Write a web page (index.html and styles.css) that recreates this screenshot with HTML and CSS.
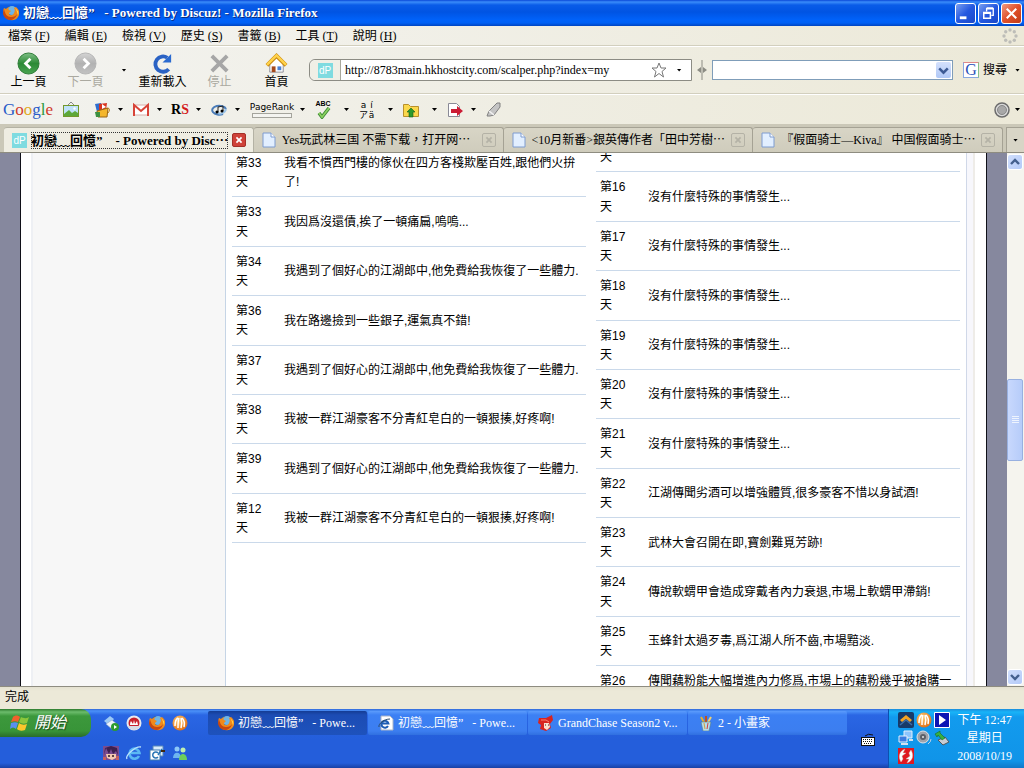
FILE: index.html
```html
<!DOCTYPE html>
<html lang="zh-Hant">
<head>
<meta charset="utf-8">
<title>初戀﹏回憶” - Powered by Discuz! - Mozilla Firefox</title>
<link rel="stylesheet" href="styles.css">
</head>
<body>
<svg class="defs" aria-hidden="true">
  <defs>
    <radialGradient id="orb" cx="40%" cy="35%" r="70%"><stop offset="0" stop-color="#ffd27a"/><stop offset="1" stop-color="#e06a10"/></radialGradient>
    <linearGradient id="greenball" x1="0" y1="0" x2="0" y2="1"><stop offset="0" stop-color="#7fbf86"/><stop offset=".5" stop-color="#2c8a36"/><stop offset="1" stop-color="#4aa552"/></linearGradient>
    <linearGradient id="grayball" x1="0" y1="0" x2="0" y2="1"><stop offset="0" stop-color="#d4d4d4"/><stop offset=".5" stop-color="#b2b2b2"/><stop offset="1" stop-color="#c2c2c2"/></linearGradient>
    <symbol id="firefox" viewBox="0 0 16 16">
      <circle cx="8" cy="8" r="7" fill="#2b5fa8"/><circle cx="9" cy="5.500" r="4.500" fill="#6fb4e6"/>
      <path d="M1 3l2 1c1-1 2-2 4-2-2 1-2 2-1 3l2 1-2 2c0 3 4 3 5 0 1-2 1-3 0-5l2-1c4 3 4 7 2 10-3 5-11 4-13-1C0 8 0 5 1 3z" fill="#f08a1c"/>
      <path d="M1 4c1 5 3 8 7 8 3 0 5-1 6-3-1 4-4 6-7 6C3 15 0 11 0 8z" fill="#c9480f"/>
      <path d="M12 3c3 2 4 5 3 7-1-2-1-5-3-7z" fill="#ffd84a"/>
    </symbol>
    <symbol id="orangeball" viewBox="0 0 16 16">
      <circle cx="8" cy="8" r="7.500" fill="url(#orb)"/>
      <path d="M3 11c0-4 1-7 3-8M6 13c0-4 0-8 1-10M9 13c1-4 1-7 0-10M12 12c1-4 0-7-2-9" fill="none" stroke="#fff" stroke-width="1.500"/>
    </symbol>
    <symbol id="page" viewBox="0 0 14 16">
      <path d="M1 1h8l4 4v10H1z" fill="#e2efff" stroke="#7e9cd0"/><path d="M9 1v4h4" fill="#fff" stroke="#7e9cd0"/>
    </symbol>
    <symbol id="flag" viewBox="0 0 20 18">
      <path d="M3 3c2-2 5-2 7 0L8 8C6 7 4 7 1 8z" fill="#f0602c"/><path d="M11 3c2 1 5 2 8 0l-2 6c-3 1-5 1-8-1z" fill="#8cc63c"/>
      <path d="M1 9c3-1 5-1 7 0l-2 6c-2-2-4-2-6 0z" fill="#5a8ff0"/><path d="M9 9c3 2 5 2 8 1l-2 6c-3 1-6 1-8-1z" fill="#fbc62c"/>
    </symbol>
  </defs>
</svg>

<header class="titlebar">
  <svg class="ico" viewBox="0 0 16 16"><use href="#firefox"/></svg>
  <h1 class="titlebar__text">初戀﹏回憶” &nbsp;&nbsp;- Powered by Discuz! - Mozilla Firefox</h1>
  <div class="winbtns">
    <button class="winbtn" aria-label="最小化"><svg viewBox="0 0 20 20"><path d="M4 13h7v3H4z" fill="#fff"/></svg></button>
    <button class="winbtn" aria-label="還原"><svg viewBox="0 0 20 20"><path d="M8 8V5h7v7h-2M8 4h7" fill="none" stroke="#fff" stroke-width="1.400"/><path d="M5 9h7v6H5zM5 9.600h7" fill="none" stroke="#fff" stroke-width="1.600"/></svg></button>
    <button class="winbtn winbtn--close" aria-label="關閉"><svg viewBox="0 0 20 20"><path d="M5 5l10 10M15 5L5 15" stroke="#fff" stroke-width="2.200"/></svg></button>
  </div>
</header>

<nav class="menubar">
  <button class="menu">檔案 (<u>F</u>)</button>
  <button class="menu">編輯 (<u>E</u>)</button>
  <button class="menu">檢視 (<u>V</u>)</button>
  <button class="menu">歷史 (<u>S</u>)</button>
  <button class="menu">書籤 (<u>B</u>)</button>
  <button class="menu">工具 (<u>T</u>)</button>
  <button class="menu">說明 (<u>H</u>)</button>
  <svg class="ico throbber" viewBox="0 0 16 16" fill="#bdbdb8"><circle cx="8" cy="2" r="1.700"/><circle cx="12.300" cy="3.700" r="1.700"/><circle cx="14" cy="8" r="1.700"/><circle cx="12.300" cy="12.300" r="1.700"/><circle cx="8" cy="14" r="1.700"/><circle cx="3.700" cy="12.300" r="1.700"/><circle cx="2" cy="8" r="1.700"/><circle cx="3.700" cy="3.700" r="1.700"/></svg>
</nav>

<div class="navbar">
  <button class="navbtn"><svg viewBox="0 0 24 24"><circle cx="12" cy="12" r="11" fill="url(#greenball)" stroke="#2d7a36"/><path d="M14 7l-5 5 5 5" fill="none" stroke="#fff" stroke-width="3"/></svg>上一頁</button>
  <button class="navbtn navbtn--off" disabled><svg viewBox="0 0 24 24"><circle cx="12" cy="12" r="11" fill="url(#grayball)" stroke="#b4b4b4"/><path d="M10 7l5 5-5 5" fill="none" stroke="#fff" stroke-width="3"/></svg>下一頁</button>
  <button class="caretbtn" aria-label="最近頁面"><span class="caret"></span></button>
  <button class="navbtn"><svg viewBox="0 0 24 24"><path d="M18.500 18A8 8 0 1 1 17 6" fill="none" stroke="#2a62c4" stroke-width="4"/><path d="M12 11h9V2z" fill="#2a6ad0"/></svg>重新載入</button>
  <button class="navbtn navbtn--off" disabled><svg viewBox="0 0 24 24"><path d="M4 4l16 16M20 4L4 20" stroke="#a6a6a6" stroke-width="4"/></svg>停止</button>
  <button class="navbtn"><svg viewBox="0 0 24 24"><path d="M5 12v9h14v-9l-7-6z" fill="#fff" stroke="#8c8c94"/><path d="M2 14L12 4l10 10" fill="none" stroke="#c98a10" stroke-width="4"/><path d="M2 13.500L12 3.500l10 10" fill="none" stroke="#ffd24a" stroke-width="2.500"/><path d="M7 15h4v6H7z" fill="#a54a1c"/><path d="M13 15h4v4h-4z" fill="#4a80d4"/></svg>首頁</button>
  <div class="urlbox">
    <span class="urlbox__site"><span class="dp">dP</span></span>
    <input class="urlbox__input" type="text" aria-label="網址" value="http://8783main.hkhostcity.com/scalper.php?index=my">
    <button class="plain" aria-label="加入書籤"><svg class="ico" viewBox="0 0 16 16"><path d="M8 1l2 5h5l-4 3.500L12.500 15 8 11.500 3.500 15 5 9.500 1 6h5z" fill="#fff" stroke="#777"/></svg></button>
    <button class="plain plain--caret" aria-label="展開網址"><span class="caret"></span></button>
  </div>
  <svg class="splitter" viewBox="0 0 10 20"><path d="M5 0v20" stroke="#8c8c84"/><path d="M4 7v6L0 10zM6 7v6l4-3z" fill="#8c8c84"/></svg>
  <div class="searchbox">
    <input class="searchbox__input" type="text" aria-label="搜尋字詞">
    <button class="xpdrop" aria-label="搜尋記錄"><svg viewBox="0 0 14 14"><path d="M3 5l4 4 4-4" fill="none" stroke="#3c5a94" stroke-width="2.400"/></svg></button>
  </div>
  <button class="gsearch"><span class="gicon">G</span>搜尋<span class="caret"></span></button>
</div>

<div class="gbar">
  <a class="glogo" href="#" aria-label="Google"><span class="gb">G</span><span class="gr">o</span><span class="gy">o</span><span class="gb">g</span><span class="gg">l</span><span class="gr">e</span></a>
  <button class="tool" aria-label="圖片"><svg class="ico" viewBox="0 0 16 16"><path d="M5 3l3-3 3 3" fill="none" stroke="#888"/><rect x=".5" y="3.500" width="15" height="11" fill="#bfe2fa" stroke="#73982c"/><path d="M1 12l5-4 3 3 3-2 3 2v3H1z" fill="#5da83a"/><circle cx="11.500" cy="6.500" r="1.200" fill="#fff"/></svg></button>
  <button class="tool" aria-label="遊戲"><svg class="ico" viewBox="0 0 16 16"><path d="M1 2l6-1 2 7-6 2z" fill="#2e6ed0"/><path d="M5 2l8-1-1 7-7 1z" fill="#d83420"/><path d="M8 2l4 3-4 2z" fill="#fff"/><path d="M3 9l11-3-1 9H4z" fill="#f4b62c" stroke="#996514"/><path d="M1 10h5v5H2z" fill="#3c9040"/><path d="M14 6q3 1 0 5" stroke="#c08018" fill="none"/></svg><span class="caret"></span></button>
  <button class="tool" aria-label="Gmail"><svg class="ico" viewBox="0 0 16 16"><path d="M1 3h14v10H1z" fill="#fff" stroke="#d8b0ac"/><path d="M1 14V3l7 6 7-6v11" fill="none" stroke="#d84438" stroke-width="2"/></svg><span class="caret"></span></button>
  <button class="tool" aria-label="RapidShare"><span class="rs">R<b>S</b></span><span class="caret"></span></button>
  <button class="tool" aria-label="音樂"><svg class="ico" viewBox="0 0 16 16"><path d="M12 12A7 4.500 0 1 1 15 7" fill="none" stroke="#4a7cb8" stroke-width="2"/><path d="M5 9c3 5 9 2 10-2" fill="none" stroke="#9cc4e8" stroke-width="2"/><path d="M7 10V5l5-1v5" fill="none" stroke="#222"/><circle cx="6" cy="10" r="1.500"/><circle cx="11" cy="9" r="1.500"/></svg><span class="caret"></span></button>
  <button class="tool tool--rank"><span class="rank">PageRank<span class="rank__bar"></span></span><span class="caret"></span></button>
  <button class="tool tool--wide" aria-label="拼字檢查"><span class="abc">ABC<svg viewBox="0 0 16 12"><path d="M4 6l3 4 7-9" fill="none" stroke="#3c8a34" stroke-width="3.500"/><path d="M4 6l3 4 7-9" fill="none" stroke="#8cd060" stroke-width="1.700"/></svg></span><span class="caret"></span></button>
  <button class="tool tool--wide" aria-label="翻譯"><span class="trans"><span>a</span><span>í</span><span>ア</span><span>ä</span></span><span class="caret"></span></button>
  <button class="tool tool--wide" aria-label="書籤資料夾"><svg class="ico" viewBox="0 0 16 16"><path d="M.5 2.500h5l2 2h8v10H.5z" fill="#fbd84c" stroke="#b8902c"/><path d="M8 6l4 4h-2v5H6v-5H4z" fill="#2c9a2c" stroke="#186018" stroke-width=".6"/></svg><span class="caret"></span></button>
  <button class="tool" aria-label="傳送"><svg class="ico" viewBox="0 0 16 16"><path d="M1.500 1.500h8l3 3v10h-11z" fill="#fff" stroke="#8a8a96"/><path d="M4 7h6V4l6 5-6 5v-3H4z" fill="#cc1c34"/></svg><span class="caret"></span></button>
  <button class="tool" aria-label="螢光筆"><svg class="ico" viewBox="0 0 16 16"><path d="M1 14l2-5 8-8h3v4L8 13l-4 1z" fill="#c4c4c4" stroke="#808080"/><path d="M3 9l5 4" stroke="#f4f4f4" stroke-width="1.500"/></svg></button>
  <button class="tool tool--end" aria-label="帳戶"><svg class="ico" viewBox="0 0 16 16"><circle cx="8" cy="8" r="7" fill="#dadada" stroke="#6c6c6c" stroke-width="1.500"/><circle cx="8" cy="8" r="4.500" fill="#a8a8a8" stroke="#888"/></svg><span class="caret"></span></button>
</div>

<div class="tabs" role="tablist">
  <div class="tab tab--on"><span class="dp">dP</span><button class="tab__name" role="tab" aria-selected="true">初戀﹏回憶” &nbsp;&nbsp;&nbsp;- Powered by Disc⋯</button><button class="tab__x" aria-label="關閉分頁"><svg viewBox="0 0 14 14"><path d="M4 4l6 6M10 4l-6 6" stroke="currentColor" stroke-width="2"/></svg></button></div>
  <div class="tab"><svg class="pageico"><use href="#page"/></svg><button class="tab__name" role="tab">Yes玩武林三国 不需下载，打开网⋯</button><button class="tab__x" aria-label="關閉分頁"><svg viewBox="0 0 14 14"><path d="M4 4l6 6M10 4l-6 6" stroke="currentColor" stroke-width="2"/></svg></button></div>
  <div class="tab"><svg class="pageico"><use href="#page"/></svg><button class="tab__name" role="tab">&lt;10月新番&gt;銀英傳作者「田中芳樹⋯</button><button class="tab__x" aria-label="關閉分頁"><svg viewBox="0 0 14 14"><path d="M4 4l6 6M10 4l-6 6" stroke="currentColor" stroke-width="2"/></svg></button></div>
  <div class="tab"><svg class="pageico"><use href="#page"/></svg><button class="tab__name" role="tab">『假面骑士—Kiva』 中国假面骑士⋯</button><button class="tab__x" aria-label="關閉分頁"><svg viewBox="0 0 14 14"><path d="M4 4l6 6M10 4l-6 6" stroke="currentColor" stroke-width="2"/></svg></button></div>
  <button class="taball" aria-label="所有分頁"><span class="caret"></span></button>
</div>

<main class="view">
  <div class="site">
    <div class="board">
      <aside class="side"></aside>
      <div class="logs">
        <table class="log">
          <tr><th scope="row">第33 天</th><td>我看不慣西門樓的傢伙在四方客棧欺壓百姓,跟他們火拚了!</td></tr>
          <tr><th scope="row">第33 天</th><td>我因爲沒還債,挨了一頓痛扁,嗚嗚...</td></tr>
          <tr><th scope="row">第34 天</th><td>我遇到了個好心的江湖郎中,他免費給我恢復了一些體力.</td></tr>
          <tr><th scope="row">第36 天</th><td>我在路邊撿到一些銀子,運氣真不錯!</td></tr>
          <tr><th scope="row">第37 天</th><td>我遇到了個好心的江湖郎中,他免費給我恢復了一些體力.</td></tr>
          <tr><th scope="row">第38 天</th><td>我被一群江湖豪客不分青紅皂白的一頓狠揍,好疼啊!</td></tr>
          <tr><th scope="row">第39 天</th><td>我遇到了個好心的江湖郎中,他免費給我恢復了一些體力.</td></tr>
          <tr><th scope="row">第12 天</th><td>我被一群江湖豪客不分青紅皂白的一頓狠揍,好疼啊!</td></tr>
        </table>
        <table class="log log--news">
          <tr><th scope="row">第15 天</th><td></td></tr>
          <tr><th scope="row">第16 天</th><td>沒有什麼特殊的事情發生...</td></tr>
          <tr><th scope="row">第17 天</th><td>沒有什麼特殊的事情發生...</td></tr>
          <tr><th scope="row">第18 天</th><td>沒有什麼特殊的事情發生...</td></tr>
          <tr><th scope="row">第19 天</th><td>沒有什麼特殊的事情發生...</td></tr>
          <tr><th scope="row">第20 天</th><td>沒有什麼特殊的事情發生...</td></tr>
          <tr><th scope="row">第21 天</th><td>沒有什麼特殊的事情發生...</td></tr>
          <tr><th scope="row">第22 天</th><td>江湖傳聞劣酒可以增強體質,很多豪客不惜以身試酒!</td></tr>
          <tr><th scope="row">第23 天</th><td>武林大會召開在即,寶劍難覓芳跡!</td></tr>
          <tr><th scope="row">第24 天</th><td>傳說軟蝟甲會造成穿戴者內力衰退,市場上軟蝟甲滯銷!</td></tr>
          <tr><th scope="row">第25 天</th><td>玉蜂針太過歹毒,爲江湖人所不齒,市場黯淡.</td></tr>
          <tr><th scope="row">第26 天</th><td>傳聞藕粉能大幅增進內力修爲,市場上的藕粉幾乎被搶購一空!</td></tr>
        </table>
      </div>
    </div>
  </div>
  <div class="scroll">
    <button class="scroll__btn" aria-label="向上捲動"><svg viewBox="0 0 14 14"><path d="M3 9l4-4 4 4" fill="none" stroke="#44608e" stroke-width="2.400"/></svg></button>
    <div class="scroll__track"><div class="scroll__thumb"><i></i><i></i><i></i><i></i></div></div>
    <button class="scroll__btn" aria-label="向下捲動"><svg viewBox="0 0 14 14"><path d="M3 5l4 4 4-4" fill="none" stroke="#44608e" stroke-width="2.400"/></svg></button>
  </div>
</main>

<div class="status">完成</div>

<footer class="taskbar">
  <button class="start"><svg viewBox="0 0 20 18"><use href="#flag"/></svg>開始</button>
  <div class="quick">
    <button class="plain" aria-label="相片工具"><svg class="ico" viewBox="0 0 16 16"><path d="M1 6l6-5 4 3-5 6z" fill="#9ccaf6"/><path d="M3 9l6-4 6 5-5 5z" fill="#eef4fc" stroke="#8ca4c8" stroke-width=".6"/><circle cx="12" cy="12" r="4" fill="#2c9a30"/><path d="M11 10v4l3-2z" fill="#fff"/></svg></button>
    <button class="plain" aria-label="播放器"><svg class="ico" viewBox="0 0 16 16"><circle cx="8" cy="8" r="7.500" fill="#e8eaf0"/><circle cx="8" cy="8" r="5.500" fill="#c8202c"/><path d="M4 10c0-3 1-4 1-4l2 3 1-4 1 4 2-3 1 4z" fill="#fff"/><path d="M2 11a6.500 6.500 0 0 0 12 0z" fill="#d8dce4"/></svg></button>
    <button class="plain" aria-label="Firefox"><svg class="ico" viewBox="0 0 16 16"><use href="#firefox"/></svg></button>
    <button class="plain" aria-label="GG"><svg class="ico" viewBox="0 0 16 16"><use href="#orangeball"/></svg></button>
    <button class="plain" aria-label="遊戲人物"><svg class="ico" viewBox="0 0 16 16"><path d="M0 1h16v14H0z" fill="#7a4c90"/><path d="M3 9h10v4l-4 2-5-2z" fill="#f4c8b0"/><path d="M1 10l2-7 3 6 2-5 2 5 3-3 2 4-1-7-6-2-6 2z" fill="#3c2050"/><path d="M5 11h2M9 11h2" stroke="#301820" stroke-width="1.500"/><path d="M0 12h3v3H0zM13 11h3v4h-3z" fill="#c46060"/></svg></button>
    <button class="plain" aria-label="Internet Explorer"><svg class="ico" viewBox="0 0 16 16"><path d="M13 11a5 5 0 1 1 .5-3H5" fill="none" stroke="#5ab8f4" stroke-width="2.600"/><path d="M1 14c-2-3 8-13 14-12" fill="none" stroke="#bce4fc" stroke-width="1.300"/></svg></button>
    <button class="plain" aria-label="Outlook"><svg class="ico" viewBox="0 0 16 16"><path d="M4 1h10v10H4z" fill="#d8ecfc" stroke="#5888b8"/><path d="M1 5h10v10H1z" fill="#fff" stroke="#3c78b0"/><path d="M9 8a3 3 0 1 0 0 4M9 10l4-6" fill="none" stroke="#2874b4" stroke-width="1.500"/><path d="M12 6h4" stroke="#402810" stroke-width="2"/></svg></button>
    <button class="plain" aria-label="Messenger"><svg class="ico" viewBox="0 0 16 16"><circle cx="5" cy="4" r="2.500" fill="#8cc8f8"/><path d="M1 13c0-7 8-7 8 0z" fill="#6cb4f0"/><circle cx="11" cy="5" r="2.500" fill="#c0f0b0"/><path d="M7 15c0-8 8-8 8 0z" fill="#6cd05c"/></svg></button>
  </div>
  <div class="tasks">
    <button class="task task--on"><svg class="ico" viewBox="0 0 16 16"><use href="#firefox"/></svg><span>初戀﹏回憶” &nbsp;&nbsp;- Powe...</span></button>
    <button class="task"><svg class="ico" viewBox="0 0 16 16"><path d="M3 1h9l3 3v11H3z" fill="#fff" stroke="#a8b4c8"/><path d="M10 11a3.500 3.500 0 1 1 .4-2.500H4" fill="none" stroke="#1c5cb4" stroke-width="2"/><path d="M1 12C0 9 6 4 12 4" fill="none" stroke="#2c4c6c"/></svg><span>初戀﹏回憶” &nbsp;&nbsp;- Powe...</span></button>
    <button class="task"><svg class="ico" viewBox="0 0 16 16"><path d="M1 3l7 0 6-3 1 5-3 4 1 4-5 3-6-2 1-4-3-2z" fill="#d82420"/><path d="M6 8l5 0 1 4-3 3-3-2z" fill="#fbe0d0"/><path d="M3 5l5 0 3 2" stroke="#f88070" fill="none"/><path d="M7 10h1M10 10h1" stroke="#402020"/></svg><span>GrandChase Season2 v...</span></button>
    <button class="task"><svg class="ico" viewBox="0 0 16 16"><path d="M7 9L3 2" stroke="#e4b030" stroke-width="2"/><path d="M8 9V1" stroke="#c05020" stroke-width="2"/><path d="M9 9l4-7" stroke="#f0d070" stroke-width="2"/><path d="M3 7h10l-2 9H5z" fill="#b8dce8" stroke="#507888" stroke-width=".6"/><path d="M6 8l1 6" stroke="#d0a040"/><path d="M9 14l1-6" stroke="#d04040"/></svg><span>2 - 小畫家</span></button>
  </div>
  <svg class="kbd" viewBox="0 0 14 14"><path d="M4 3q3-3 8-1" fill="none" stroke="#111"/><rect x=".5" y="4.500" width="13" height="8" fill="#fff" stroke="#111"/><path d="M2 6.500h10M2 8.500h10M3 10.500h8" stroke="#111" stroke-dasharray="1 1"/></svg>
  <div class="tray">
    <div class="tray__icons">
      <svg class="ico" viewBox="0 0 16 16"><rect width="16" height="16" rx="2" fill="#173a68"/><path d="M2 8l6-5 6 5-2 2-4-3-4 3z" fill="#f4a424"/><path d="M2 13l6-5 6 5" fill="none" stroke="#3c6ca8" stroke-width="1.500"/></svg>
      <svg class="ico" viewBox="0 0 16 16"><use href="#orangeball"/></svg>
      <svg class="ico" viewBox="0 0 16 16"><path d="M.5.5h15v15H.5z" fill="#0c14b4" stroke="#fff"/><path d="M5 3v10l7-5z" fill="#fff"/></svg>
      <svg class="ico" viewBox="0 0 16 16"><path d="M6 1h8v7H6z" fill="#8cc4fc" stroke="#e4f0fc"/><path d="M1 6h8v6H1z" fill="#3c7ce0" stroke="#e4f0fc"/><path d="M3 14h7M11 10h4" stroke="#d4e0f0" stroke-width="2"/></svg>
      <svg class="ico" viewBox="0 0 16 16"><circle cx="7" cy="7" r="6" fill="#a0a4ac" stroke="#e0e0e4"/><circle cx="7" cy="7" r="3" fill="#5c6068"/><circle cx="7" cy="7" r="1" fill="#e4e4e4"/><path d="M12 14q3-2 3-5" fill="none" stroke="#c4d0e4"/></svg>
      <svg class="ico" viewBox="0 0 16 16"><path d="M4 10l7-3 4 5-6 3z" fill="#c8ccd4" stroke="#50585c"/><path d="M1 4l5-3v2l5 5-3 2-4-5-1 2z" fill="#38b040" stroke="#186c20" stroke-width=".6"/></svg>
      <svg class="ico" viewBox="0 0 16 16"><path d="M0 0h16v16H0z" fill="#e01820"/><path d="M7 1C1 3 0 9 3 14l2-3-1-3 4-3-3 0zM9 15c6-2 7-8 4-13l-2 3 1 3-4 3 3 0z" fill="#fff" stroke="#c0c0c0" stroke-width=".4"/></svg>
    </div>
    <div class="clock"><span>下午 12:47</span><span>星期日</span><span>2008/10/19</span></div>
  </div>
</footer>
</body>
</html>
```
FILE: styles.css
```css
* { box-sizing: border-box; }

body {
  margin: 0;
  height: 100vh;
  display: flex;
  flex-direction: column;
  overflow: hidden;
  background: #ece9d8;
  color: #000;
  font: 12px/16px "Liberation Serif", "Noto Sans CJK TC", serif;
}

button, input { font: inherit; color: inherit; }

button {
  padding: 0;
  border: 0;
  background: none;
  white-space: nowrap;
}

.defs { position: absolute; width: 0; height: 0; }
.ico { width: 16px; height: 16px; flex: none; display: block; }

.caret {
  width: 5px;
  height: 3px;
  flex: none;
  background: #000;
  clip-path: polygon(0 0, 100% 0, 50% 100%);
}

.plain { display: grid; place-items: center; }

/* title bar */
.titlebar {
  flex: none;
  height: 26px;
  padding: 0 2px 0 3px;
  display: flex;
  align-items: center;
  gap: 4px;
  background: linear-gradient(#0a48d8 0, #3a8cfa 2px, #0a5ce8 5px, #0054e3 12px, #0062fa 20px, #0060f4 23px, #0044c0 26px);
}
.titlebar__text {
  flex: 1;
  margin: 0;
  color: #fff;
  font-size: 13px;
  line-height: 18px;
  font-weight: bold;
  text-shadow: 1px 1px 0 #0a2c80;
  white-space: nowrap;
  overflow: hidden;
}
.winbtns { display: flex; gap: 2px; }
.winbtn {
  width: 21px;
  height: 21px;
  border: 1px solid #fff;
  border-radius: 3px;
  background: linear-gradient(135deg, #7a9ff0, #2458e0 50%, #1a48c8);
}
.winbtn svg { display: block; width: 19px; height: 19px; }
.winbtn--close { background: linear-gradient(135deg, #f09a80, #e0502a 50%, #c03c18); }

/* menu bar */
.menubar {
  flex: none;
  height: 20px;
  padding: 0 6px 0 8px;
  display: flex;
  align-items: center;
  gap: 15px;
  background: linear-gradient(90deg, #f4f4f2, #ece9d8);
  border-bottom: 1px solid #d2cfbe;
}
.throbber { margin-left: auto; }

/* navigation */
.navbar {
  flex: none;
  height: 48px;
  padding-right: 4px;
  display: flex;
  align-items: center;
  background: linear-gradient(90deg, #f3f3f0, #ece9d8);
  border-top: 1px solid #fff;
  border-bottom: 1px solid #d2cfbe;
}
.navbtn {
  width: 57px;
  flex: none;
  display: flex;
  flex-direction: column;
  align-items: center;
  line-height: 14px;
}
.navbtn svg { width: 23px; height: 23px; display: block; }
.navbtn--off { color: #aaa9a0; }
.caretbtn { width: 20px; height: 40px; flex: none; display: grid; place-items: center; }
.urlbox {
  flex: 383;
  min-width: 0;
  height: 22px;
  margin-left: 4px;
  display: flex;
  align-items: center;
  background: #fff;
  border: 1px solid #8c8c84;
  border-radius: 6px 0 0 6px;
}
.urlbox__site {
  width: 31px;
  height: 20px;
  flex: none;
  display: grid;
  place-items: center;
  background: #f0efe6;
  border-right: 1px solid #a8a89c;
  border-radius: 6px 0 0 6px;
}
.dp {
  width: 15px;
  height: 15px;
  flex: none;
  background: #7fdbe0;
  color: #fff;
  font: 10px/15px "Liberation Sans", sans-serif;
  text-align: center;
}
.urlbox__input {
  flex: 1;
  min-width: 0;
  height: 18px;
  padding: 0 4px;
  border: 0;
  background: none;
  outline: 0;
}
.plain--caret { width: 24px; height: 20px; }
.splitter { width: 10px; height: 20px; margin: 0 5px; flex: none; }
.searchbox {
  flex: 240;
  min-width: 0;
  height: 20px;
  display: flex;
  align-items: center;
  background: #fff;
  border: 1px solid #7f9db9;
}
.searchbox__input { flex: 1; min-width: 0; height: 16px; border: 0; outline: 0; }
.xpdrop {
  width: 15px;
  height: 16px;
  margin-right: 1px;
  border-radius: 2px;
  background: linear-gradient(#d4e0fc, #b0c8f6);
}
.xpdrop svg { display: block; width: 15px; }
.gsearch {
  flex: none;
  margin-left: 10px;
  display: flex;
  align-items: center;
  gap: 4px;
}
.gsearch .caret { margin-left: 4px; }
.gicon {
  width: 16px;
  height: 16px;
  border: 1px solid #c4c4c4;
  border-color: #e08888 #88c088 #88a8e0 #88a8e0;
  background: #fff;
  color: #2a52b8;
  font-size: 16px;
  line-height: 14px;
  text-align: center;
}

/* toolbar */
.gbar {
  flex: none;
  height: 30px;
  padding: 0 4px 0 3px;
  display: flex;
  align-items: center;
  gap: 10px;
  background: linear-gradient(90deg, #f2f2ee, #ece9d8);
  border-top: 1px solid #fff;
}
.glogo {
  width: 50px;
  flex: none;
  font-size: 17px;
  line-height: 22px;
  text-decoration: none;
}
.gb { color: #2a5cc8; }
.gr { color: #d03a2c; }
.gy { color: #e0a81c; }
.gg { color: #2c9a40; }
.tool { display: flex; align-items: center; gap: 8px; flex: none; }
.glogo + .tool { margin-right: 5px; }
.tool--wide { gap: 13px; }
.tool--end { margin-left: auto; gap: 5px; }
.rs {
  width: 16px;
  font: bold 14px/16px "Liberation Serif", serif;
  display: flex;
  justify-content: center;
}
.rs b { color: #d41c1c; }
.rank {
  width: 44px;
  display: flex;
  flex-direction: column;
  align-items: center;
  font: 9px/12px "DejaVu Sans", sans-serif;
}
.rank__bar { width: 40px; height: 5px; border: 1px solid #a4a49c; background: #f4f4f0; }
.tool--rank { gap: 6px; }
.abc { width: 16px; font: bold 7px/6px "Liberation Sans", sans-serif; }
.abc svg { width: 16px; height: 12px; display: block; }
.trans {
  width: 16px;
  display: grid;
  grid-template-columns: 1fr 1fr;
  font: 9px/10px "DejaVu Sans", "Noto Sans CJK JP", sans-serif;
}

/* tabs */
.tabs {
  flex: none;
  height: 29px;
  padding: 3px 0 0 4px;
  display: flex;
  background: #cbc8b8;
  border-bottom: 1px solid #8e8c80;
}
.tab {
  flex: 1;
  min-width: 0;
  padding: 0 7px 0 8px;
  display: flex;
  align-items: center;
  gap: 4px;
  background: linear-gradient(#d8d5c6, #cfccbc);
  border: 1px solid #a5a294;
  border-width: 1px 1px 0 0;
  border-radius: 3px 3px 0 0;
}
.tab--on { background: #efede2; border-color: #b4b2a4; font-weight: bold; }
.tab__name { flex: 1; min-width: 0; overflow: hidden; text-align: left; line-height: 17px; }
.tab--on .tab__name { font-size: 13px; font-weight: bold; outline: 1px dotted #333; outline-offset: -1px; }
.pageico { width: 14px; height: 16px; flex: none; margin-right: 2px; }
.tab__x {
  width: 14px;
  height: 14px;
  flex: none;
  border: 1px solid #b4b2a6;
  border-radius: 2px;
  color: #b4b2a6;
}
.tab__x svg { display: block; width: 12px; height: 12px; }
.tab--on .tab__x { background: #cf4238; border-color: #a43028; color: #fff; }
.taball {
  width: 18px;
  margin-left: 3px;
  flex: none;
  display: grid;
  place-items: center;
  background: #d8d5c6;
  border: 1px solid #a5a294;
  border-width: 1px 0 0 1px;
}

/* web page */
.view { flex: 1; min-height: 0; display: flex; background: #86889e; }
.site {
  flex: 1;
  min-width: 0;
  margin: 0 20px;
  padding: 0 11px 0 10px;
  overflow: hidden;
  background: #fff;
  border: 1px solid #101018;
  border-width: 0 1px;
}
.board {
  height: 100%;
  display: flex;
  border-left: 2px solid #eef0f4;
  border-right: 2px solid #eeece8;
}
.side { width: 192px; flex: none; background: #f7f7f7; }
.logs {
  flex: 1;
  min-width: 0;
  padding: 0 6px;
  display: grid;
  grid-template-columns: 354fr 364fr;
  gap: 10px;
  align-items: start;
  border-left: 1px solid #c6d5e6;
  border-right: 1px solid #d0d8e8;
  margin-right: 6px;
  box-shadow: 6px 0 0 #f7f7fc;
}
.log {
  width: 100%;
  margin-top: -5px;
  table-layout: fixed;
  border-collapse: separate;
  border-spacing: 0;
  font: 12px/1.6 "Liberation Sans", "Noto Sans CJK TC", sans-serif;
}
.log--news { margin-top: -30px; }
.log th, .log td {
  padding: 6px 4px 4px;
  border-bottom: 1px solid #cad9ea;
  text-align: left;
  font-weight: normal;
}
.log th { width: 48px; padding-right: 14px; }

.scroll {
  width: 17px;
  flex: none;
  padding: 1px 1px 1px 0;
  display: flex;
  flex-direction: column;
  background: #f5f4ee;
}
.scroll__btn {
  width: 16px;
  height: 16px;
  flex: none;
  border: 1px solid #fff;
  border-radius: 3px;
  background: linear-gradient(135deg, #d0defc, #b4caf8);
}
.scroll__btn svg { display: block; width: 14px; height: 14px; }
.scroll__track { flex: 1; display: grid; align-items: center; }
.scroll__thumb {
  height: 82px;
  display: flex;
  flex-direction: column;
  align-items: center;
  justify-content: center;
  gap: 1px;
  border: 1px solid #98b0e0;
  border-radius: 2px;
  background: linear-gradient(90deg, #c8d8fd, #b6ccf9);
}
.scroll__thumb i { width: 7px; height: 1px; background: #eef4fe; }

.status {
  flex: none;
  height: 23px;
  padding: 0 5px;
  line-height: 20px;
  border-top: 1px solid #8e8c80;
  background: linear-gradient(#e4e1d0, #ece9d8 4px);
}

/* taskbar */
.taskbar {
  flex: none;
  height: 59px;
  display: flex;
  color: #fff;
  background: linear-gradient(#3168d8 0, #4a90f8 2px, #2a66e4 6px, #245edb 30px, #245edb 54px, #1941a5 59px);
}
.start {
  width: 91px;
  height: 28px;
  flex: none;
  padding-left: 10px;
  display: flex;
  align-items: center;
  gap: 4px;
  border-radius: 0 10px 10px 0;
  background: linear-gradient(#2c7a2c 0, #6cbc6c 3px, #3c983c 7px, #389438 22px, #2a6c2a);
  font-size: 16px;
  font-style: italic;
  text-shadow: 1px 1px 1px #1c481c;
}
.start svg { width: 20px; height: 18px; }
.quick {
  flex: none;
  margin-left: 12px;
  width: 92px;
  display: grid;
  grid-template-columns: repeat(4, 1fr);
  grid-template-rows: 28px 28px;
  justify-items: start;
  row-gap: 2px;
}
.tasks {
  flex: 640;
  min-width: 0;
  margin-left: 13px;
  padding-top: 2px;
  display: grid;
  grid-template-columns: repeat(4, 1fr);
  grid-template-rows: 24px;
}
.task {
  min-width: 0;
  padding: 0 10px;
  margin-right: 1px;
  display: flex;
  align-items: center;
  gap: 4px;
  overflow: hidden;
  border-radius: 2px;
  background: linear-gradient(#5c9cfc, #3c80f4 4px, #3c7ef0 20px, #3070e0);
}
.task--on { background: linear-gradient(#143c94, #1c4cb4 4px, #1e52bc); }
.kbd { width: 14px; height: 14px; flex: none; margin: 24px 13px 0; }
.tray {
  flex: none;
  width: 136px;
  padding: 2px 12px 3px 9px;
  display: flex;
  justify-content: space-between;
  background: linear-gradient(#1a8cdc 0, #18b4f8 3px, #129bee 8px, #1094e8 52px, #1078c8);
  border-left: 1px solid #0c50b0;
}
.tray__icons { display: grid; grid-template-columns: 16px 16px 16px; grid-auto-rows: 18px; column-gap: 2px; align-items: center; }
.clock { display: flex; flex-direction: column; align-items: center; line-height: 18px; }
```
